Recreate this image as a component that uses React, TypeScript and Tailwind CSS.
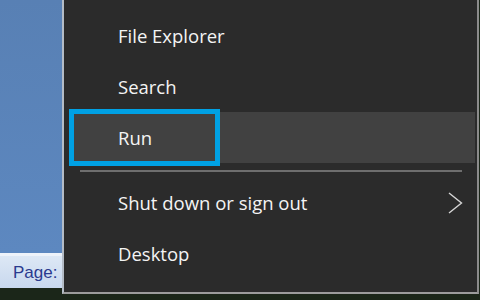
import React from "react";

const font = { fontFamily: '"Open Sans", "Noto Sans", sans-serif' };

function Row({ children }: { children: React.ReactNode }) {
  return (
    <div className="h-[51px] flex items-center pl-[54px] pt-[1px] text-[18.5px] text-[#f4f4f4]" style={font}>
      {children}
    </div>
  );
}

export default function App() {
  return (
    <div className="w-[480px] h-[300px] flex bg-[#1b2619] overflow-hidden">
      <div className="w-[62px] h-[300px] flex flex-col">
        <div className="h-[253px] bg-gradient-to-b from-[#5880b4] to-[#5d88c0]" />
        <div className="h-[3px] bg-[#eef3fa]" />
        <div className="h-[32px] bg-gradient-to-b from-[#dde8f5] to-[#c8d8ee] flex items-center pl-[13px]">
          <span className="text-[17px] text-[#2a3a8e] leading-none" style={{ fontFamily: '"Liberation Sans", Arial, sans-serif' }}>
            Page:
          </span>
        </div>
        <div className="flex-1 bg-[#1b2619]" />
      </div>
      <div className="flex-1 flex flex-col">
        <div className="w-[417px] h-[294px] bg-[#2b2b2b] border-l-2 border-r-2 border-b-2 border-l-[#b4bcc6] border-r-[#8c8c8c] border-b-[#9c9c9c] pt-[10px] flex flex-col">
          <Row>File Explorer</Row>
          <Row>Search</Row>
          <div className="relative h-[51px] ml-[8px] mr-[2px] bg-[#414141] flex items-center pl-[46px] pt-[1px] text-[18.5px] text-[#f4f4f4]" style={font}>
            <div className="absolute left-[-3px] top-[-3px] w-[151px] h-[57px] border-[5px] border-[#00a1e4]" />
            <span className="relative">Run</span>
          </div>
          <div className="h-[14px] pt-[7px]">
            <div className="ml-[16px] w-[382px] h-[2px] bg-[#6e6e6e]" />
          </div>
          <div className="h-[51px] flex items-center pl-[54px] pt-[1px] text-[18.5px] text-[#f4f4f4]" style={font}>
            <span>Shut down or sign out</span>
            <svg className="ml-auto mr-[14px]" width="15" height="22" viewBox="0 0 15 22">
              <path d="M1 1 L13.5 11 L1 21" fill="none" stroke="#d6d6d6" strokeWidth="1.4" />
            </svg>
          </div>
          <Row>Desktop</Row>
        </div>
        <div className="flex-1 bg-[#1b2619]" />
      </div>
    </div>
  );
}
